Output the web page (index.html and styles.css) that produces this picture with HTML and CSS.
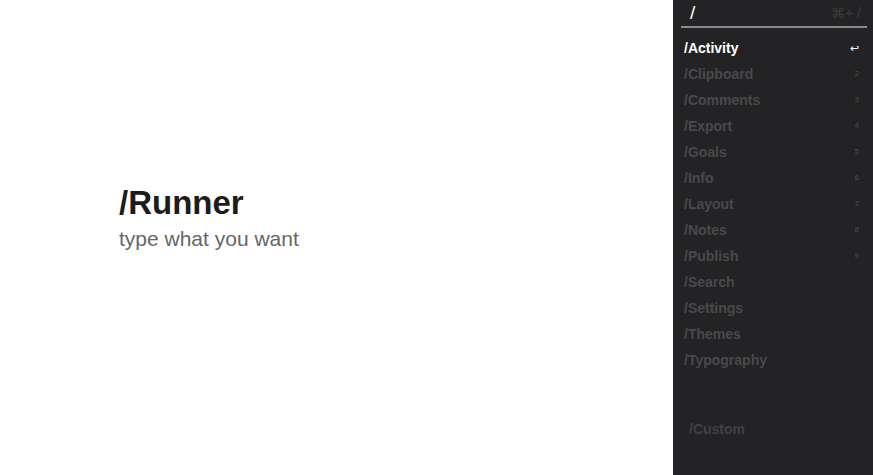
FILE: index.html
```html
<!DOCTYPE html>
<html>
<head>
<meta charset="utf-8">
<link rel="stylesheet" href="styles.css">
</head>
<body>
<div class="app">
  <main class="main">
    <h1 class="title">/Runner</h1>
    <p class="subtitle">type what you want</p>
  </main>
  <aside class="panel">
    <div class="search">
      <span class="query">/</span>
      <span class="hint">⌘+ /</span>
    </div>
    <ul class="list">
      <li class="item active"><span>/Activity</span><span class="key enter">↩</span></li>
      <li class="item"><span>/Clipboard</span><span class="key">2</span></li>
      <li class="item"><span>/Comments</span><span class="key">3</span></li>
      <li class="item"><span>/Export</span><span class="key">4</span></li>
      <li class="item"><span>/Goals</span><span class="key">5</span></li>
      <li class="item"><span>/Info</span><span class="key">6</span></li>
      <li class="item"><span>/Layout</span><span class="key">7</span></li>
      <li class="item"><span>/Notes</span><span class="key">8</span></li>
      <li class="item"><span>/Publish</span><span class="key">9</span></li>
      <li class="item"><span>/Search</span></li>
      <li class="item"><span>/Settings</span></li>
      <li class="item"><span>/Themes</span></li>
      <li class="item"><span>/Typography</span></li>
    </ul>
    <div class="custom">/Custom</div>
  </aside>
</div>
</body>
</html>
```
FILE: styles.css
```css
html, body {
  margin: 0;
  padding: 0;
  height: 100%;
  background: #ffffff;
  font-family: "Liberation Sans", Arial, sans-serif;
}
.app {
  display: flex;
  height: 475px;
  width: 873px;
  overflow: hidden;
}
.main {
  flex: 1;
  padding: 184px 0 0 119px;
}
.title {
  margin: 0;
  font-size: 33px;
  line-height: 38px;
  font-weight: 700;
  color: #1c1c1c;
}
.subtitle {
  margin: 4px 0 0;
  font-size: 21px;
  line-height: 25px;
  color: #666666;
}
.panel {
  width: 200px;
  background: #232325;
  display: flex;
  flex-direction: column;
}
.search {
  margin: 0 6px 0 8px;
  height: 26px;
  border-bottom: 2px solid #8a8a8a;
  display: flex;
  align-items: center;
  justify-content: space-between;
  padding: 0 6px 0 9px;
}
.query {
  color: #ffffff;
  font-size: 19px;
  line-height: 26px;
}
.hint {
  color: #3c3c3e;
  font-size: 14px;
  line-height: 26px;
}
.list {
  list-style: none;
  margin: 7px 0 0;
  padding: 0;
}
.item {
  display: flex;
  justify-content: space-between;
  align-items: center;
  height: 26px;
  line-height: 26px;
  padding: 0 14px 0 11px;
  font-size: 14px;
  font-weight: 700;
  color: #49494b;
}
.item.active {
  color: #ffffff;
}
.key {
  font-size: 8px;
  font-weight: 400;
  color: #4c4c4e;
}
.key.enter {
  font-size: 11px;
  color: #ffffff;
}
.custom {
  margin-top: 43px;
  padding-left: 16px;
  height: 26px;
  line-height: 26px;
  font-size: 14px;
  font-weight: 700;
  color: #414143;
}
```
